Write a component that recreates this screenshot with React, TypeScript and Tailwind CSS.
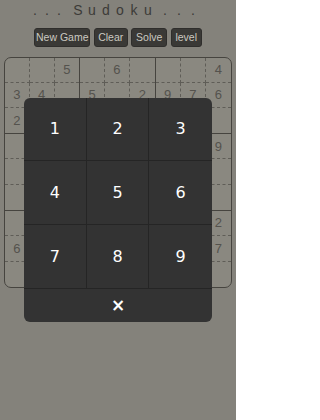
import React from 'react'

const BOARD = [
  '..5.6...4',
  '34.5.2976',
  '2........',
  '........9',
  '.........',
  '.........',
  '........2',
  '6.......7',
  '.........',
]

const TITLE: { ch: string; cls: string }[] = [
  { ch: '.', cls: 'w-[12px]' },
  { ch: '.', cls: 'w-[12px]' },
  { ch: '.', cls: 'w-[12px]' },
  { ch: 'S', cls: 'w-[14px] ml-[6px]' },
  { ch: 'u', cls: 'w-[14px]' },
  { ch: 'd', cls: 'w-[14px]' },
  { ch: 'o', cls: 'w-[14px]' },
  { ch: 'k', cls: 'w-[14px]' },
  { ch: 'u', cls: 'w-[14px]' },
  { ch: '.', cls: 'w-[14px] ml-[3px]' },
  { ch: '.', cls: 'w-[14px]' },
  { ch: '.', cls: 'w-[14px]' },
]

const BUTTONS = [
  { label: 'New Game', w: 'w-[56px]' },
  { label: 'Clear', w: 'w-[34px]' },
  { label: 'Solve', w: 'w-[36px]' },
  { label: 'level', w: 'w-[31px]' },
]

function Block({ br, bc }: { br: number; bc: number }) {
  const cells = []
  for (let r = 0; r < 3; r++) {
    for (let c = 0; c < 3; c++) {
      const v = BOARD[br * 3 + r][bc * 3 + c]
      cells.push(
        <div
          key={`${r}-${c}`}
          className={
            'flex items-center justify-center border-[#5f5d57] border-dashed text-[13px] text-[#54524d] ' +
            (c < 2 ? 'border-r ' : '') +
            (r < 2 ? 'border-b' : '')
          }
        >
          {v !== '.' ? v : ''}
        </div>
      )
    }
  }
  return (
    <div
      className={
        'grid grid-cols-3 grid-rows-3 border-[#46443f] ' +
        (bc < 2 ? 'border-r ' : '') +
        (br < 2 ? 'border-b' : '')
      }
    >
      {cells}
    </div>
  )
}

export default function App() {
  const keys = ['1', '2', '3', '4', '5', '6', '7', '8', '9']
  return (
    <div
      className="relative w-[236px] h-[420px] bg-[#84827b] overflow-hidden"
      style={{ fontFamily: '"Liberation Sans", "DejaVu Sans", sans-serif' }}
    >
      <div className="flex h-[20px] pl-[29px] leading-[20px] text-[14px] text-[#3c3b38]">
        {TITLE.map((t, i) => (
          <span key={i} className={`${t.cls} text-center`}>{t.ch}</span>
        ))}
      </div>

      <div className="mt-[8px] flex justify-center gap-[3.5px]">
        {BUTTONS.map((b) => (
          <div
            key={b.label}
            className={`${b.w} h-[19px] flex items-center justify-center rounded-[3px] bg-[#3a3936] border border-[#2f2e2c] text-[10.5px] text-[#cbc9c1] whitespace-nowrap`}
          >
            {b.label}
          </div>
        ))}
      </div>

      <div className="mt-[10px] ml-[4px] w-[228px] h-[231px] rounded-[7px] border border-[#46443f] bg-[#8a8880] grid grid-cols-3 grid-rows-3 overflow-hidden">
        {[0, 1, 2].map((br) =>
          [0, 1, 2].map((bc) => <Block key={`${br}${bc}`} br={br} bc={bc} />)
        )}
      </div>

      <div
        className="absolute left-[24px] top-[98px] w-[188px] h-[224px] rounded-[6px] bg-[#333333] flex flex-col overflow-hidden"
        style={{ fontFamily: '"DejaVu Sans", sans-serif' }}
      >
        <div className="grid grid-cols-3 grid-rows-[63px_64px_64px]">
          {keys.map((k, i) => (
            <div
              key={k}
              className={
                'flex items-center justify-center border-[#252525] border-b text-[16px] text-white ' +
                (i % 3 < 2 ? 'border-r' : '')
              }
            >
              {k}
            </div>
          ))}
        </div>
        <div className="flex flex-1 items-center justify-center text-[17px] font-bold text-white">×</div>
      </div>
    </div>
  )
}
